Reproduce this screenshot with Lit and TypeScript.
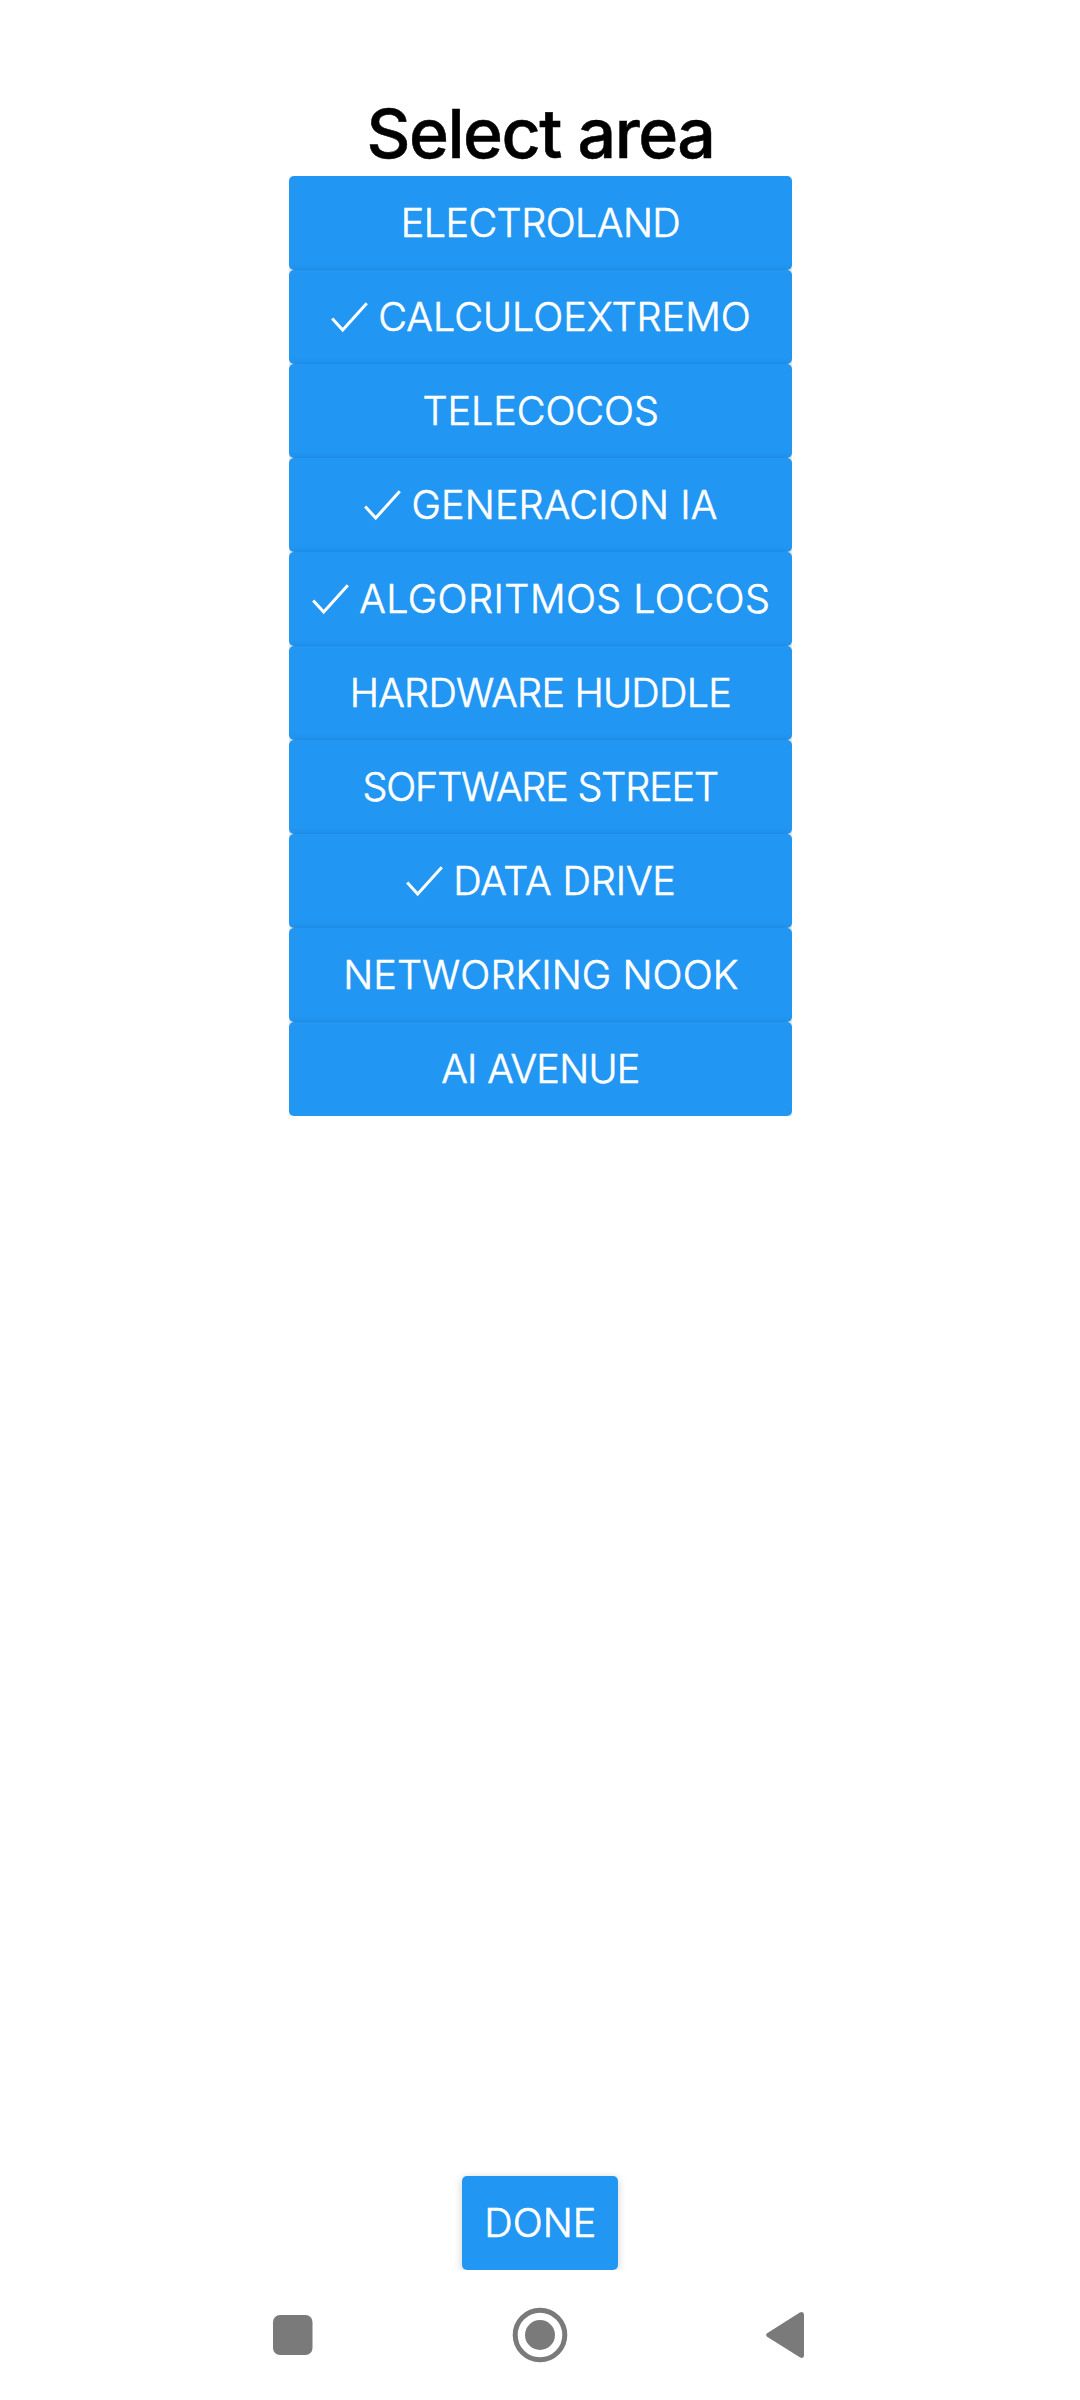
import { LitElement, html, css, nothing } from "lit";
import { customElement, property } from "lit/decorators.js";

interface Area {
  name: string;
  selected: boolean;
  tracking: number;
}

const AREAS: Area[] = [
  { name: "ELECTROLAND", selected: false, tracking: -0.55 },
  { name: "CALCULOEXTREMO", selected: true, tracking: 0.03 },
  { name: "TELECOCOS", selected: false, tracking: -0.05 },
  { name: "GENERACION IA", selected: true, tracking: 0.15 },
  { name: "ALGORITMOS LOCOS", selected: true, tracking: 0.44 },
  { name: "HARDWARE HUDDLE", selected: false, tracking: -0.75 },
  { name: "SOFTWARE STREET", selected: false, tracking: -1.15 },
  { name: "DATA DRIVE", selected: true, tracking: -0.13 },
  { name: "NETWORKING NOOK", selected: false, tracking: 0.1 },
  { name: "AI AVENUE", selected: false, tracking: -0.68 },
];

@customElement("area-button")
export class AreaButton extends LitElement {
  @property() label = "";
  @property({ type: Boolean }) selected = false;
  @property({ type: Number }) tracking = 0;

  static styles = css`
    :host {
      display: block;
    }
    .button {
      display: flex;
      align-items: center;
      justify-content: center;
      box-sizing: border-box;
      width: 100%;
      height: 94px;
      margin: 0;
      padding: 0 21.5px 0 22px;
      border: 0;
      border-radius: 5px;
      background: #2196f3;
      color: #fff;
      font: 300 39.5px/48px Inter, "Liberation Sans", sans-serif;
      -webkit-text-stroke: 0.6px #fff;
      white-space: nowrap;
      box-shadow: 0 2px 8px rgba(0, 0, 0, 0.2);
    }
    .check {
      flex: none;
      width: 37px;
      height: 32px;
      margin-right: 10.5px;
    }
  `;

  render() {
    return html`<button class="button">
      ${this.selected
        ? html`<svg class="check" viewBox="0 0 37 32" fill="none" stroke="#fff" stroke-width="3">
            <path d="M1.2 17.5 11.7 29 35.8 2.2" />
          </svg>`
        : nothing}
      <span style="letter-spacing:${this.tracking}px;margin-right:${-this.tracking}px">${this.label}</span>
    </button>`;
  }
}

@customElement("app-root")
export class AppRoot extends LitElement {
  static styles = css`
    :host {
      display: block;
    }
    .screen {
      display: flex;
      flex-direction: column;
      align-items: center;
      box-sizing: border-box;
      width: 1080px;
      height: 2400px;
      padding-top: 91px;
      overflow: hidden;
      background: #fff;
    }
    .title {
      margin: 0;
      padding-left: 1px;
      height: 85px;
      color: #000;
      font: 500 68px/84px Inter, "Liberation Sans", sans-serif;
      letter-spacing: -1.5px;
      -webkit-text-stroke: 0.5px #000;
    }
    .list {
      width: 503px;
      margin-left: 1px;
      overflow: hidden;
    }
    .footer {
      display: flex;
      justify-content: center;
      width: 200px;
      height: 124px;
      padding-top: 30px;
      margin-top: auto;
      box-sizing: border-box;
      overflow: hidden;
    }
    .done {
      width: 156px;
    }
    .nav {
      display: flex;
      justify-content: space-between;
      align-items: center;
      box-sizing: border-box;
      width: 100%;
      height: 130px;
      padding: 0 276px 0 273px;
      fill: #7a7a7a;
    }
    .nav svg {
      display: block;
    }
  `;

  render() {
    return html`<main class="screen">
      <h1 class="title">Select area</h1>
      <div class="list">
        ${AREAS.map(
          (a) => html`<area-button .label=${a.name} .selected=${a.selected} .tracking=${a.tracking}></area-button>`,
        )}
      </div>
      <div class="footer"><area-button class="done" label="DONE"></area-button></div>
      <nav class="nav">
        <svg width="40" height="40" viewBox="0 0 40 40"><rect width="39.5" height="40" rx="7" /></svg>
        <svg width="56" height="56" viewBox="0 0 56 56">
          <circle cx="28" cy="28" r="24.8" fill="none" stroke="#7a7a7a" stroke-width="5" />
          <circle cx="28" cy="28" r="15" />
        </svg>
        <svg width="38" height="48" viewBox="0 0 38 48">
          <path d="M1.1 22.3 33.8 1.5Q37.7-.2 38 3.5V44.5Q37.7 48.2 33.8 46.3L1.1 25.7Q-.8 24 1.1 22.3Z" />
        </svg>
      </nav>
    </main>`;
  }
}
